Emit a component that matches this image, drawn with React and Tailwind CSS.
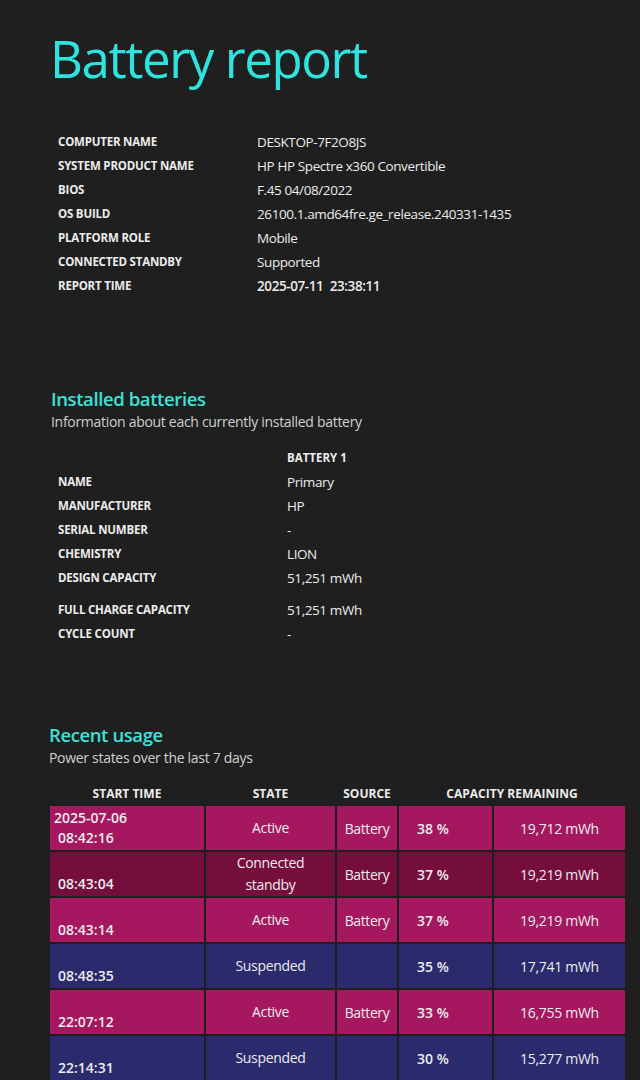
import React from "react";

const info = [
  ["COMPUTER NAME", "DESKTOP-7F2O8JS"],
  ["SYSTEM PRODUCT NAME", "HP HP Spectre x360 Convertible"],
  ["BIOS", "F.45 04/08/2022"],
  ["OS BUILD", "26100.1.amd64fre.ge_release.240331-1435"],
  ["PLATFORM ROLE", "Mobile"],
  ["CONNECTED STANDBY", "Supported"],
  ["REPORT TIME", "2025-07-11  23:38:11"],
];

const battery = [
  ["NAME", "Primary"],
  ["MANUFACTURER", "HP"],
  ["SERIAL NUMBER", "-"],
  ["CHEMISTRY", "LION"],
  ["DESIGN CAPACITY", "51,251 mWh"],
  ["FULL CHARGE CAPACITY", "51,251 mWh", true],
  ["CYCLE COUNT", "-"],
];

const usage = [
  { date: "2025-07-06", time: "08:42:16", state: "Active", source: "Battery", pct: "38 %", mwh: "19,712 mWh" },
  { time: "08:43:04", state: "Connected standby", source: "Battery", pct: "37 %", mwh: "19,219 mWh" },
  { time: "08:43:14", state: "Active", source: "Battery", pct: "37 %", mwh: "19,219 mWh" },
  { time: "08:48:35", state: "Suspended", source: "", pct: "35 %", mwh: "17,741 mWh" },
  { time: "22:07:12", state: "Active", source: "Battery", pct: "33 %", mwh: "16,755 mWh" },
  { time: "22:14:31", state: "Suspended", source: "", pct: "30 %", mwh: "15,277 mWh" },
];

const rowColor = {
  Active: "bg-[#a5175f]",
  "Connected standby": "bg-[#760e3d]",
  Suspended: "bg-[#2a2a6c]",
};

export default function App() {
  return (
    <div
      className="w-[640px] h-[1080px] overflow-hidden bg-[#1f1f1f] text-[#ececec]"
      style={{ fontFamily: '"Open Sans", "Noto Sans", sans-serif' }}
    >
      <h1 className="pl-[50px] pt-[26px] text-[51px] leading-[64px] text-[#2fe3df] tracking-[-1.4px]">
        Battery report
      </h1>

      <div className="pl-[58px] pt-[40px]">
        {info.map(([k, v]) => (
          <div key={k} className="flex h-[24px] items-center">
            <div className="w-[199px] text-[11.5px] font-bold tracking-[-0.2px]">{k}</div>
            <div className={`text-[13.5px] tracking-[-0.4px] whitespace-pre ${k === "REPORT TIME" ? "font-semibold" : ""}`}>{v}</div>
          </div>
        ))}
      </div>

      <div className="pl-[51px] pt-[89px]">
        <div className="text-[18.5px] font-semibold leading-[24px] text-[#3fe0d8] tracking-[-0.4px]">Installed batteries</div>
        <div className="text-[14px] leading-[22px] text-[#cfcfcf] tracking-[-0.3px]">Information about each currently installed battery</div>
      </div>

      <div className="pl-[58px] pt-[13px]">
        <div className="flex h-[24px] items-center">
          <div className="w-[229px]" />
          <div className="text-[11.5px] font-bold">BATTERY 1</div>
        </div>
        {battery.map(([k, v, gap]) => (
          <div key={k} className={`flex h-[24px] items-center ${gap ? "mt-[8px]" : ""}`}>
            <div className="w-[229px] text-[11.5px] font-bold tracking-[-0.2px]">{k}</div>
            <div className="text-[13.5px] tracking-[-0.4px]">{v}</div>
          </div>
        ))}
      </div>

      <div className="pl-[49px] pt-[77px]">
        <div className="text-[18.5px] font-semibold leading-[24px] text-[#3fe0d8] tracking-[-0.4px]">Recent usage</div>
        <div className="text-[14px] leading-[22px] text-[#cfcfcf] tracking-[-0.3px]">Power states over the last 7 days</div>
      </div>

      <div className="ml-[50px] mt-[14px] w-[573px]">
        <div className="grid grid-cols-[154px_129px_60px_93px_131px] gap-x-[2px] h-[21px] items-center text-[12px] font-bold text-center">
          <div>START TIME</div>
          <div>STATE</div>
          <div>SOURCE</div>
          <div className="col-span-2">CAPACITY REMAINING</div>
        </div>
        <div className="flex flex-col gap-[2px] mt-[2px]">
          {usage.map((r) => (
            <div key={r.time} className="grid grid-cols-[154px_129px_60px_93px_131px] gap-x-[2px] h-[44px]">
              <div className={`${rowColor[r.state]} px-[4px] flex flex-col justify-end pb-[2px] text-[14px] font-semibold leading-[20px]`}>
                {r.date && <div>{r.date}</div>}
                <div className="pl-[4px]">{r.time}</div>
              </div>
              <div className={`${rowColor[r.state]} flex items-center justify-center text-center text-[14px] leading-[22px] px-[14px] tracking-[-0.3px]`}>
                {r.state}
              </div>
              <div className={`${rowColor[r.state]} flex items-center justify-center text-[14px] tracking-[-0.4px]`}>
                {r.source}
              </div>
              <div className={`${rowColor[r.state]} flex items-center pl-[18px] text-[14px] font-semibold`}>
                {r.pct}
              </div>
              <div className={`${rowColor[r.state]} flex items-center justify-center text-[14px] tracking-[-0.3px]`}>
                {r.mwh}
              </div>
            </div>
          ))}
        </div>
      </div>
    </div>
  );
}
